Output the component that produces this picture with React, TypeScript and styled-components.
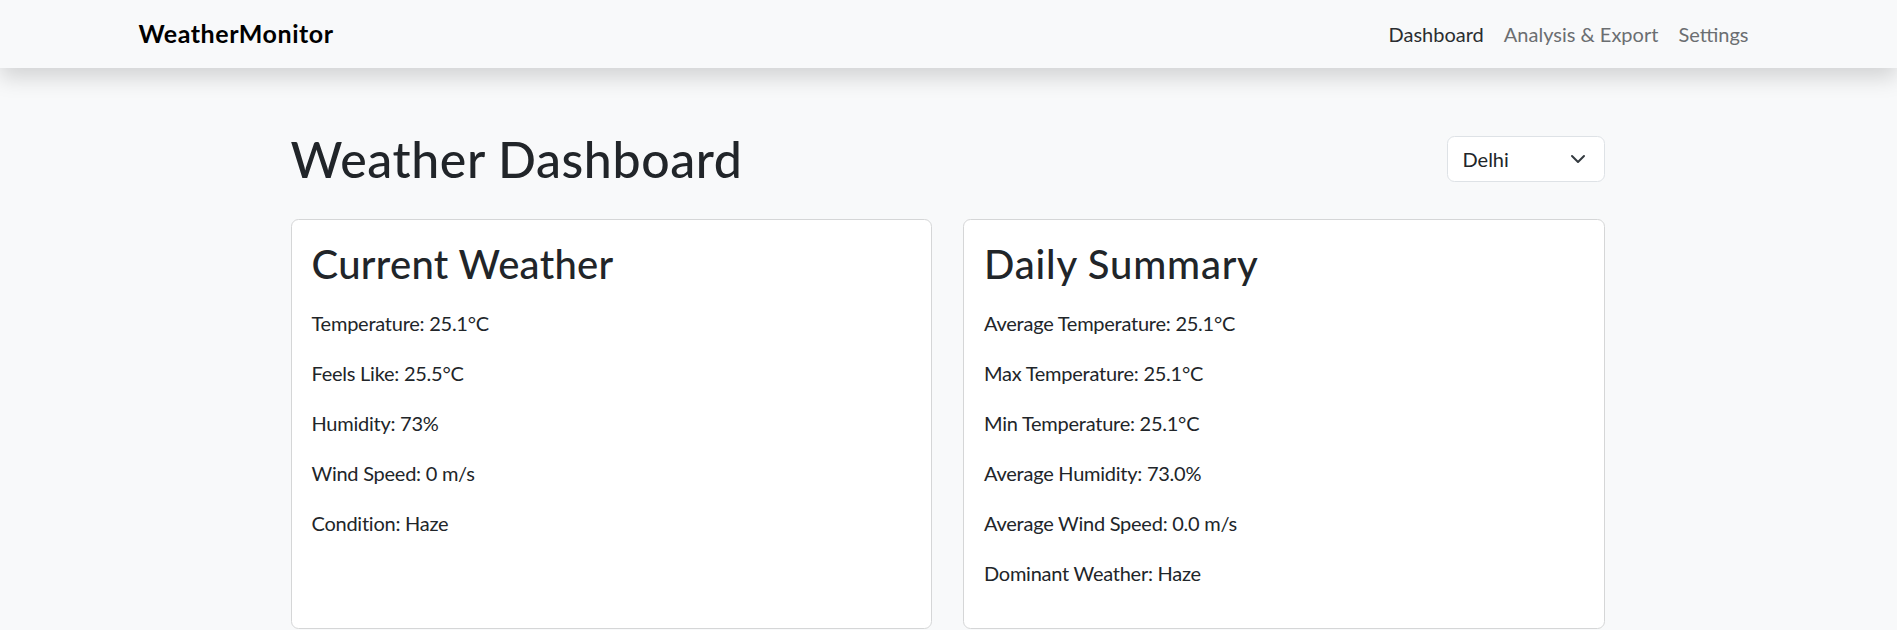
import React from "react";
import styled, { createGlobalStyle } from "styled-components";

const GlobalStyle = createGlobalStyle`
  html, body {
    margin: 0;
    padding: 0;
    background: #f8f9fa;
    color: #212529;
    font-family: Lato, "Open Sans", sans-serif;
  }
  * { box-sizing: border-box; }
`;

const NavBar = styled.nav`
  background: #f8f9fa;
  box-shadow: 0 10px 20px rgba(0, 0, 0, 0.15);
  position: relative;
  z-index: 1;
`;

const NavContainer = styled.div`
  max-width: 1650px;
  margin: 0 auto;
  padding: 0 15px;
  height: 68px;
  display: flex;
  align-items: center;
  justify-content: space-between;
`;

const Brand = styled.a`
  font-size: 25px;
  font-weight: 700;
  letter-spacing: 0.55px;
  color: #000;
  text-decoration: none;
  line-height: 1.5;
`;

const NavList = styled.div`
  display: flex;
  align-items: center;
`;

const NavLink = styled.a<{ $active?: boolean }>`
  font-size: 20px;
  line-height: 30px;
  padding: 10px;
  color: ${(p) => (p.$active ? "#2b2d30" : "#6b6e71")};
  text-decoration: none;
`;

const Main = styled.main`
  width: 1314px;
  margin-left: calc(50% - 658px);
  padding-top: 61px;
`;

const Header = styled.div`
  display: flex;
  align-items: center;
  justify-content: space-between;
  margin-bottom: 30px;
`;

const Title = styled.h1`
  margin: 0;
  font-size: 50px;
  font-weight: 500;
  letter-spacing: 0.6px;
  line-height: 60px;
  color: #212529;
`;

const Select = styled.div`
  width: 158px;
  height: 46px;
  background: #fff;
  border: 1px solid #dee2e6;
  border-radius: 7.5px;
  display: flex;
  align-items: center;
  justify-content: space-between;
  padding: 0 18px 0 15px;
  font-size: 20px;
  color: #212529;
`;

const Cards = styled.div`
  display: grid;
  grid-template-columns: 1fr 1fr;
  gap: 31px;
`;

const Card = styled.section`
  background: #fff;
  border: 1px solid #d5d6d7;
  border-radius: 7.5px;
  padding: 20px;
`;

const CardTitle = styled.h2<{ $spacing?: number }>`
  margin: 0 0 20px;
  font-size: 40px;
  font-weight: 500;
  letter-spacing: ${(p) => p.$spacing ?? 0.3}px;
  line-height: 48px;
  color: #212529;
`;

const Line = styled.p`
  margin: 0 0 20px;
  font-size: 20px;
  letter-spacing: -0.25px;
  line-height: 30px;
  color: #212529;
`;

const current = [
  "Temperature: 25.1°C",
  "Feels Like: 25.5°C",
  "Humidity: 73%",
  "Wind Speed: 0 m/s",
  "Condition: Haze",
];

const summary = [
  "Average Temperature: 25.1°C",
  "Max Temperature: 25.1°C",
  "Min Temperature: 25.1°C",
  "Average Humidity: 73.0%",
  "Average Wind Speed: 0.0 m/s",
  "Dominant Weather: Haze",
];

export default function App() {
  return (
    <>
      <GlobalStyle />
      <NavBar>
        <NavContainer>
          <Brand href="#">WeatherMonitor</Brand>
          <NavList>
            <NavLink $active href="#">Dashboard</NavLink>
            <NavLink href="#">Analysis &amp; Export</NavLink>
            <NavLink href="#">Settings</NavLink>
          </NavList>
        </NavContainer>
      </NavBar>
      <Main>
        <Header>
          <Title>Weather Dashboard</Title>
          <Select>
            <span>Delhi</span>
            <svg width="16" height="12" viewBox="0 2 16 12" fill="none">
              <path d="m2 5 6 6 6-6" stroke="#343a40" strokeWidth="2" strokeLinecap="round" strokeLinejoin="round" />
            </svg>
          </Select>
        </Header>
        <Cards>
          <Card>
            <CardTitle>Current Weather</CardTitle>
            {current.map((t) => (
              <Line key={t}>{t}</Line>
            ))}
          </Card>
          <Card>
            <CardTitle $spacing={0.8}>Daily Summary</CardTitle>
            {summary.map((t) => (
              <Line key={t}>{t}</Line>
            ))}
          </Card>
        </Cards>
      </Main>
    </>
  );
}
